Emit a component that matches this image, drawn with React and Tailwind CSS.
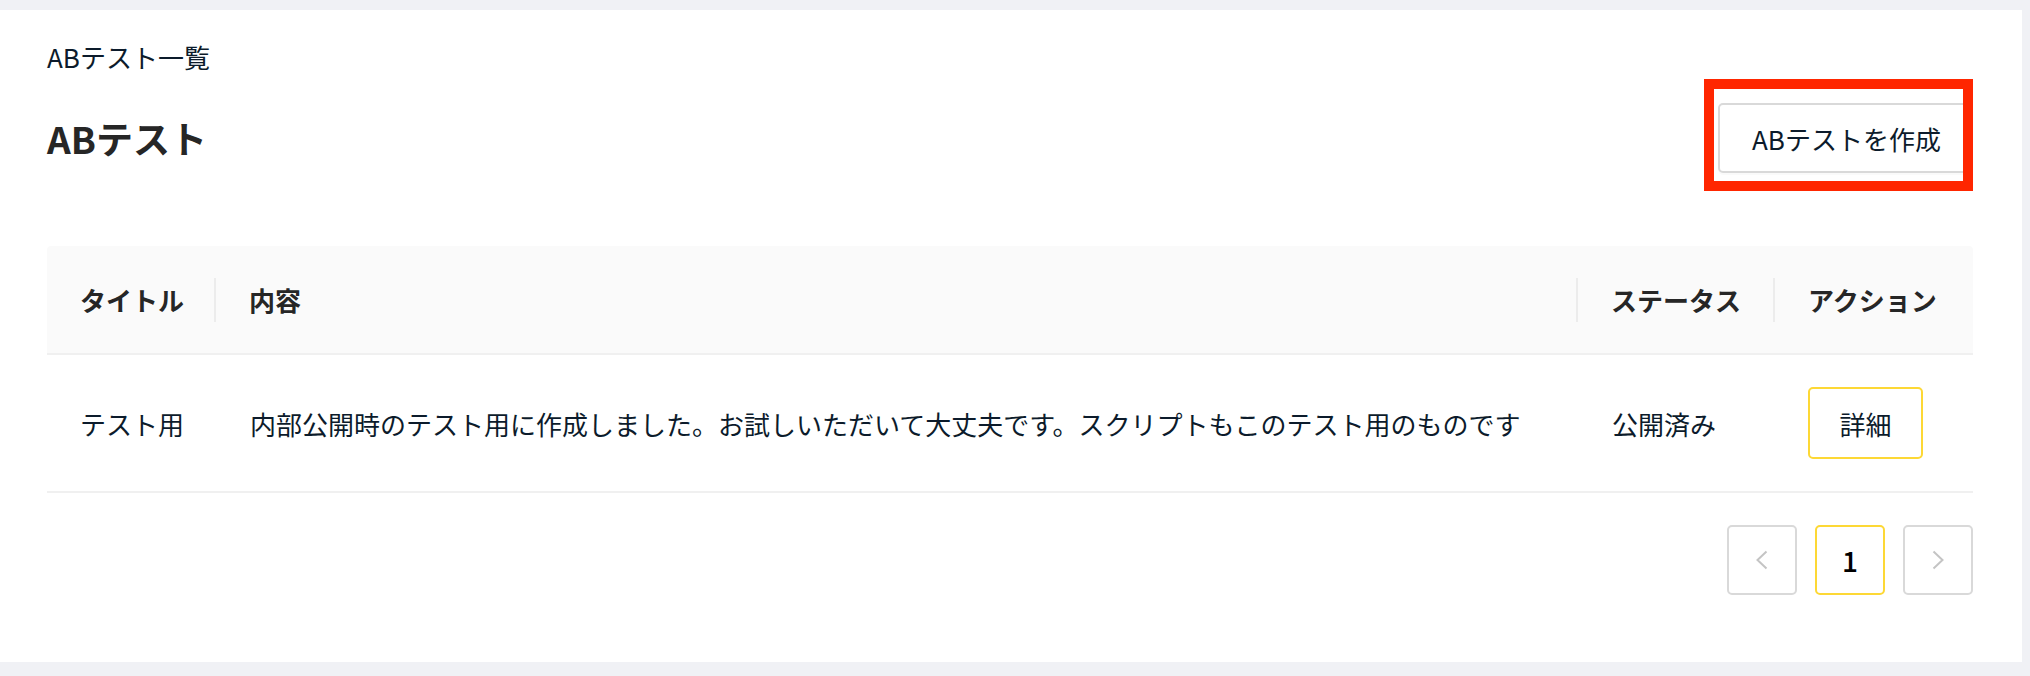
import { useState } from "react"

const font = { fontFamily: '"Noto Sans CJK JP", "Noto Sans", sans-serif' }

const rows = [
    {
        title: "テスト用",
        body: "内部公開時のテスト用に作成しました。お試しいただいて大丈夫です。スクリプトもこのテスト用のものです",
        status: "公開済み",
    },
]

const Chevron = ({ dir }) => (
    <svg width="14" height="20" viewBox="0 0 14 20" fill="none">
        {dir === "left" ? (
            <path d="M11.5 1.5L2.5 10l9 8.5" stroke="#c4c4c4" strokeWidth="2" />
        ) : (
            <path d="M2.5 1.5l9 8.5-9 8.5" stroke="#c4c4c4" strokeWidth="2" />
        )}
    </svg>
)

const HeadCell = ({ label, sep }) => (
    <div className="flex items-center justify-between h-full pl-[33px]">
        <p className="text-[26px] font-bold text-[#262626] leading-[36px]">{label}</p>
        {sep && <div className="w-[2px] h-[44px] bg-[#ececec]"></div>}
    </div>
)

export default function App() {
    const [page] = useState(1)

    return (
        <main className="w-full min-h-[676px] bg-[#f0f1f5] pt-[10px] pr-[8px]" style={font}>
            <div className="bg-white h-[652px] pl-[47px] pr-[49px] pt-[29px]">
                <p className="text-[26px] leading-[36px] text-[#0c1b2b]">ABテスト一覧</p>

                <div className="flex justify-between items-center h-[70px] mt-[28px]">
                    <h1 className="text-[37px] font-bold text-[#262626] leading-[50px]">ABテスト</h1>
                    <div className="relative">
                        <button className="h-[70px] w-[255px] pl-[32px] text-left border-2 border-[#d9d9d9] rounded-[5px] bg-white shadow-[0_2px_0_rgba(0,0,0,0.02)] text-[26px] text-[#0c1b2b]">
                            ABテストを作成
                        </button>
                        <div className="absolute -left-[14px] -top-[24px] w-[269px] h-[112px] border-[10px] border-[#ff2600]"></div>
                    </div>
                </div>

                <div className="mt-[73px]">
                    <div className="grid grid-cols-[169px_1fr_197px_198px] h-[109px] bg-[#fafafa] border-b-2 border-[#f0f0f0] rounded-t-[4px]">
                        <HeadCell label="タイトル" sep />
                        <HeadCell label="内容" sep />
                        <HeadCell label="ステータス" sep />
                        <HeadCell label="アクション" />
                    </div>
                    {rows.map((r, idx) => (
                        <div key={idx} className="grid grid-cols-[169px_1fr_197px_198px] h-[138px] border-b-2 border-[#f0f0f0] items-center text-[26px] text-[#0c1b2b]">
                            <p className="pl-[33px]">{r.title}</p>
                            <p className="pl-[34px] whitespace-nowrap">{r.body}</p>
                            <p className="pl-[34px]">{r.status}</p>
                            <div className="pl-[33px]">
                                <button className="w-[115px] h-[72px] border-2 border-[#fdd835] rounded-[5px] bg-white text-[26px] text-[#0c1b2b]">
                                    詳細
                                </button>
                            </div>
                        </div>
                    ))}
                </div>

                <div className="flex justify-end gap-[18px] mt-[32px]">
                    <div className="w-[70px] h-[70px] border-2 border-[#d9d9d9] rounded-[5px] flex items-center justify-center">
                        <Chevron dir="left" />
                    </div>
                    <div className="w-[70px] h-[70px] border-2 border-[#fdd835] rounded-[5px] flex items-center justify-center text-[28px] font-medium text-black">
                        {page}
                    </div>
                    <div className="w-[70px] h-[70px] border-2 border-[#d9d9d9] rounded-[5px] flex items-center justify-center">
                        <Chevron dir="right" />
                    </div>
                </div>
            </div>
        </main>
    )
}
